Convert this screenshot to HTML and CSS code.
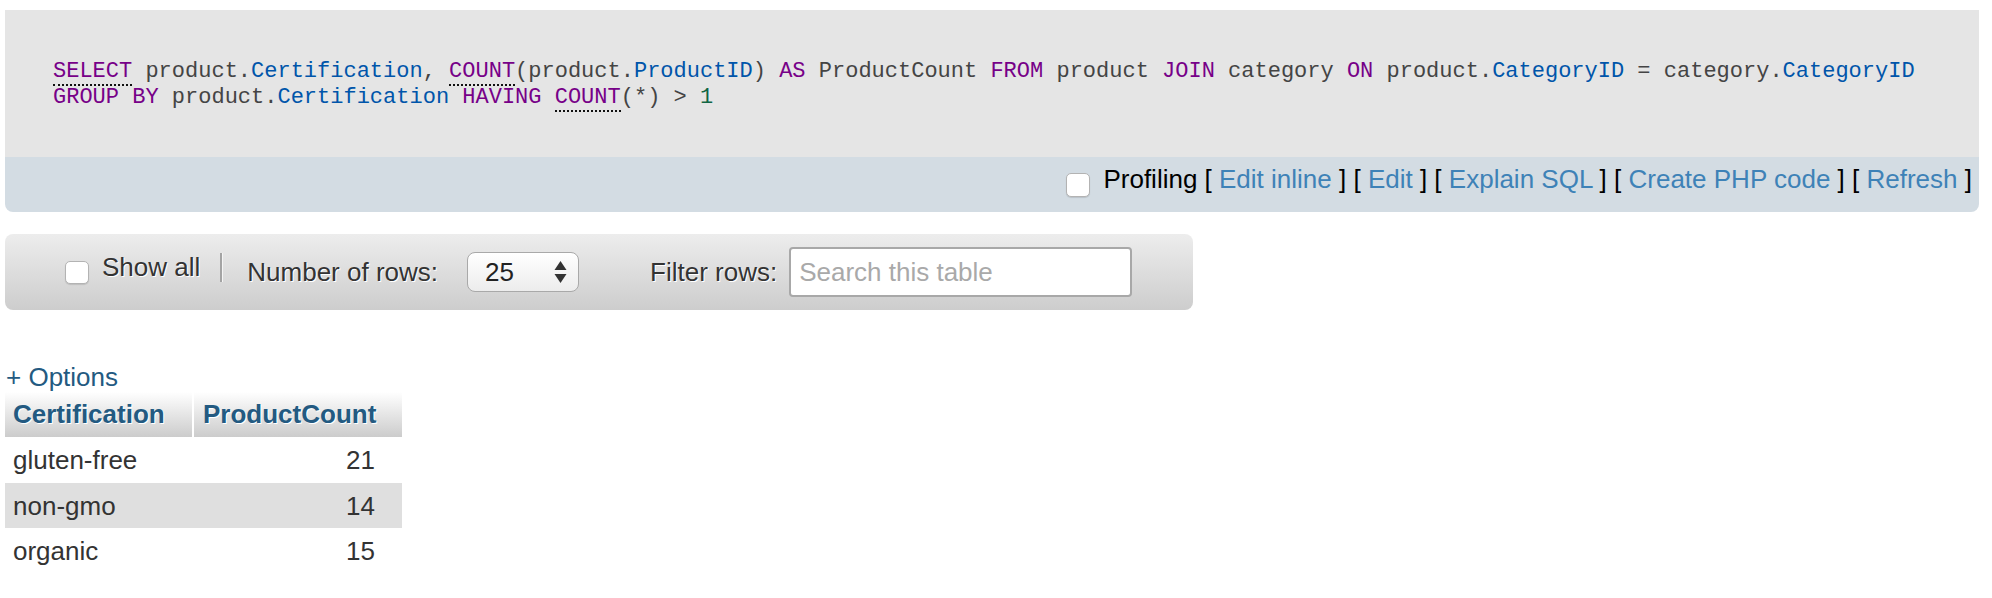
FILE: index.html
```html
<!DOCTYPE html>
<html>
<head>
<meta charset="utf-8">
<link rel="stylesheet" href="styles.css">
</head>
<body>
<div class="sql-outer">
  <div class="sql-code">
    <div class="line"><span class="kw dfn">SELECT</span> product.<span class="v2">Certification</span>, <span class="kw dfn">COUNT</span>(product.<span class="v2">ProductID</span>) <span class="kw">AS</span> ProductCount <span class="kw">FROM</span> product <span class="kw">JOIN</span> category <span class="kw">ON</span> product.<span class="v2">CategoryID</span> = category.<span class="v2">CategoryID</span></div>
    <div class="line"><span class="kw">GROUP BY</span> product.<span class="v2">Certification</span> <span class="kw">HAVING</span> <span class="kw dfn">COUNT</span>(*) &gt; <span class="num">1</span></div>
  </div>
  <div class="tools">
    <span class="check tool-check"></span>
    <span class="tool-text">Profiling [ <a class="tlink">Edit inline</a> ] [ <a class="tlink">Edit</a> ] [ <a class="tlink">Explain SQL</a> ] [ <a class="tlink">Create PHP code</a> ] [ <a class="tlink">Refresh</a> ]</span>
  </div>
</div>

<div class="navbar">
  <span class="check nav-check"></span>
  <span class="nav-text show-all">Show all</span>
  <span class="sep"></span>
  <span class="nav-text rows-label">Number of rows:</span>
  <div class="select">
    <span class="select-val">25</span>
    <svg class="arrows" width="13" height="24" viewBox="0 0 13 24"><polygon points="6.5,1 12.5,10 0.5,10" fill="#333"/><polygon points="0.5,14 12.5,14 6.5,23" fill="#333"/></svg>
  </div>
  <span class="nav-text filter-label">Filter rows:</span>
  <input class="search" type="text" placeholder="Search this table">
</div>

<div class="options">+ Options</div>
<table class="data">
  <colgroup><col class="c1"><col class="c2"></colgroup>
  <thead>
    <tr><th class="h1">Certification</th><th class="h2">ProductCount</th></tr>
  </thead>
  <tbody>
    <tr class="odd"><td>gluten-free</td><td class="n">21</td></tr>
    <tr class="even"><td>non-gmo</td><td class="n">14</td></tr>
    <tr class="odd"><td>organic</td><td class="n">15</td></tr>
  </tbody>
</table>
</body>
</html>
```

FILE: styles.css
```css
html, body {
  margin: 0;
  padding: 0;
  background: #fff;
}
body {
  font-family: "Liberation Sans", Arial, sans-serif;
  font-size: 26px;
  color: #333;
}

.sql-outer {
  margin: 10px 13px 0 5px;
  border-radius: 0 0 8px 8px;
  overflow: hidden;
}
.sql-code {
  background: #e5e5e5;
  height: 147px;
  box-sizing: border-box;
  padding: 49px 0 0 48px;
  font-family: "Liberation Mono", "Courier New", monospace;
  font-size: 22px;
  line-height: 26px;
  color: #444;
}
.line {
  white-space: pre;
}
.kw { color: #770088; }
.v2 { color: #0055aa; }
.num { color: #116644; }
.dfn { border-bottom: 2px dotted #111; }

.tools {
  background: #d3dce3;
  height: 55px;
  box-sizing: border-box;
  padding: 7px 7px 0 0;
  display: flex;
  justify-content: flex-end;
  align-items: flex-start;
  color: #000;
}
.tool-text {
  line-height: 30px;
  white-space: nowrap;
}
.tlink {
  color: #3e82b7;
  text-decoration: none;
}

.check {
  display: block;
  box-sizing: border-box;
  background: #fff;
  border: 1px solid #b3b3b3;
  border-radius: 5px;
  box-shadow: 0 1px 1px rgba(0,0,0,0.12);
  flex: none;
}
.tool-check {
  width: 24px;
  height: 24px;
  margin: 9px 13px 0 0;
}

.navbar {
  margin: 22px 0 0 5px;
  width: 1188px;
  height: 76px;
  box-sizing: border-box;
  border-radius: 8px;
  background: linear-gradient(to bottom, #ededed, #cdcdcd);
  display: flex;
  align-items: center;
  padding-left: 60px;
}
.nav-check {
  width: 24px;
  height: 23px;
  margin-right: 13px;
}
.nav-text {
  line-height: 30px;
  color: #333;
  text-shadow: 1px 1px 0 #fff;
  white-space: nowrap;
}
.show-all {
  margin-bottom: 10px;
}
.sep {
  display: block;
  width: 2px;
  height: 29px;
  background: #a4a4a4;
  border-right: 1px solid #f4f4f4;
  margin: 0 0 10px 20px;
}
.rows-label {
  margin-left: 24px;
}
.select {
  margin-left: 29px;
  width: 112px;
  height: 40px;
  box-sizing: border-box;
  border: 1px solid #a9a9a9;
  border-radius: 8px;
  background: linear-gradient(to bottom, #ffffff, #ececec);
  box-shadow: inset 0 1px 0 #fff;
  display: flex;
  align-items: center;
  justify-content: space-between;
  padding: 0 11px 0 17px;
}
.select-val {
  color: #222;
  line-height: 30px;
}
.arrows {
  display: block;
}
.filter-label {
  margin-left: 71px;
}
.search {
  margin-left: 12px;
  width: 343px;
  height: 50px;
  box-sizing: border-box;
  border: 2px solid #a8a8a8;
  border-radius: 4px;
  background: #fff;
  padding: 0 0 0 8px;
  font-family: "Liberation Sans", Arial, sans-serif;
  font-size: 26px;
  color: #333;
  outline: none;
}
.search::placeholder {
  color: #a9a9a9;
}

.options {
  margin: 52px 0 0 6px;
  line-height: 30px;
  color: #235a81;
}

.data {
  margin: 0 0 0 5px;
  border-collapse: separate;
  border-spacing: 0;
  table-layout: fixed;
  width: 397px;
}
.c1 { width: 189px; }
.c2 { width: 208px; }
.data th {
  background: linear-gradient(to bottom, #ffffff, #cccccc);
  color: #235a81;
  font-weight: bold;
  text-align: left;
  text-shadow: 1px 1px 0 #fff;
  line-height: 30px;
  padding: 7px 0 8px 0;
  white-space: nowrap;
}
.data th.h1 {
  padding-left: 8px;
  border-right: 2px solid #fff;
}
.data th.h2 {
  padding-left: 9px;
}
.data td {
  line-height: 30px;
  padding: 8px 27px 7.5px 8px;
  color: #333;
  white-space: nowrap;
}
.data td.n {
  text-align: right;
}
.data tr.even td {
  background: #dfdfdf;
}
```
